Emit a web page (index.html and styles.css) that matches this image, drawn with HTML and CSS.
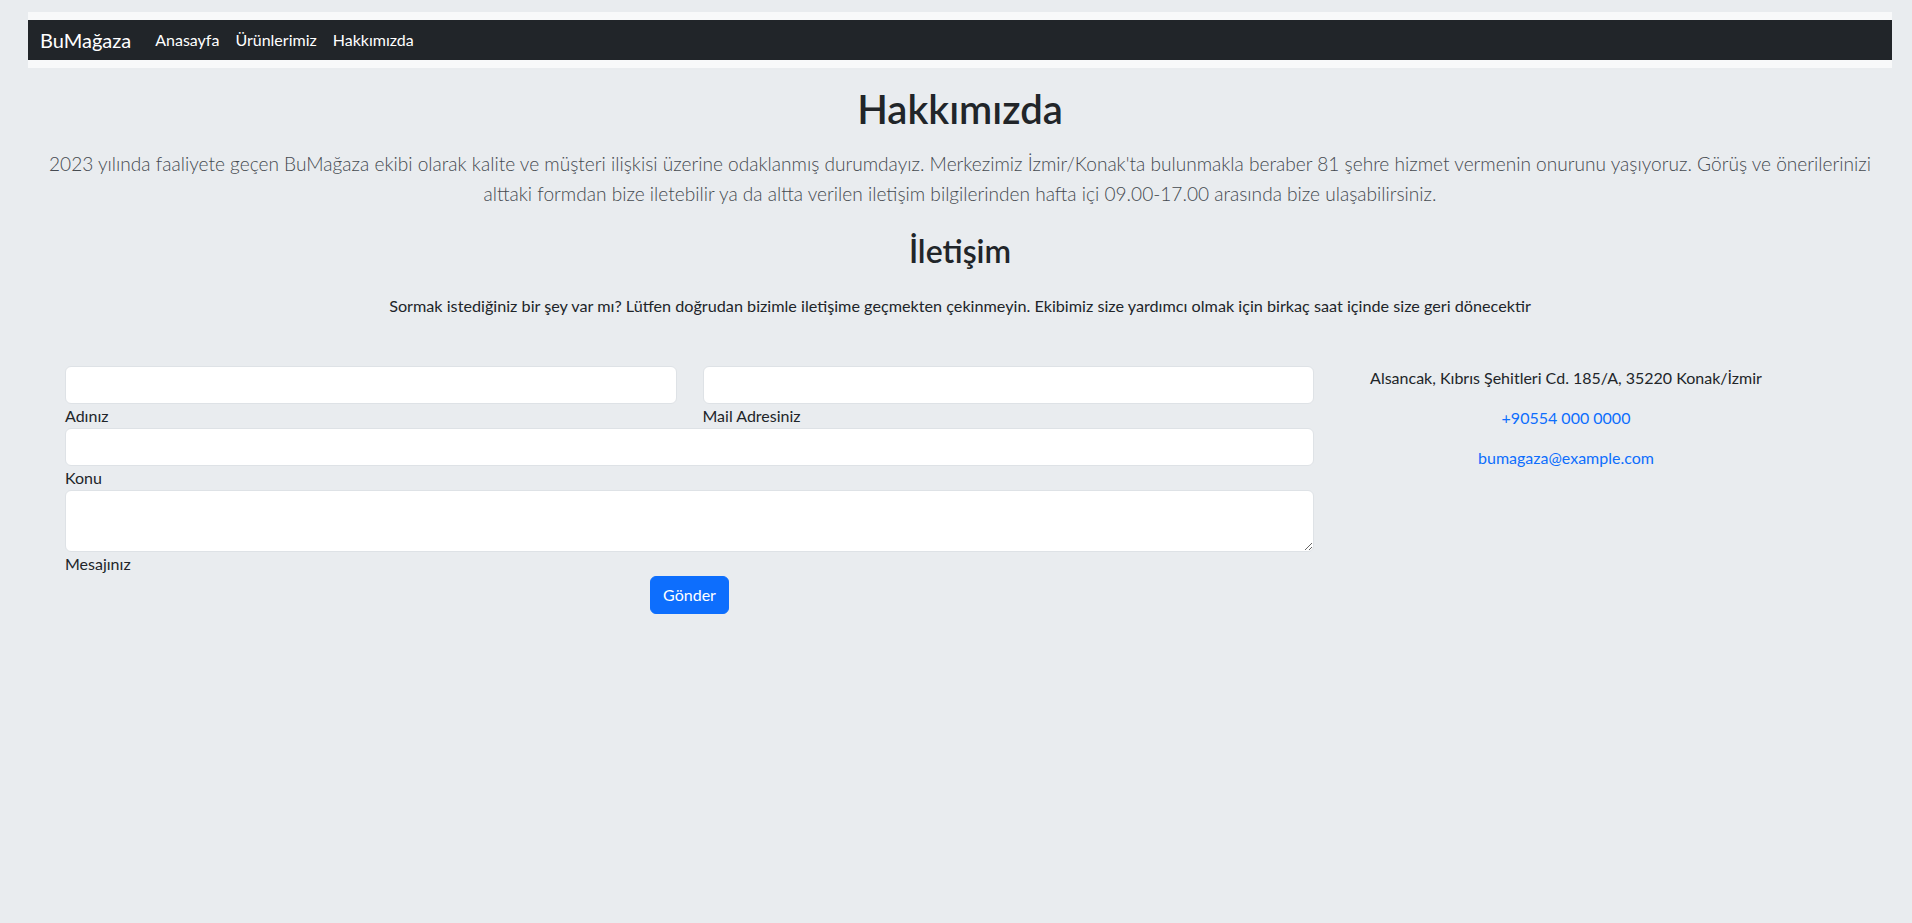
FILE: index.html
```html
<!DOCTYPE html>
<html lang="tr">
<head>
<meta charset="utf-8">
<title>Hakkımızda - BuMağaza</title>
<link rel="stylesheet" href="styles.css">
</head>
<body>
<div class="navwrap">
  <nav class="navbar">
    <a class="brand" href="#">BuMağaza</a>
    <ul class="nav">
      <li><a href="#">Anasayfa</a></li>
      <li><a href="#">Ürünlerimiz</a></li>
      <li><a href="#">Hakkımızda</a></li>
    </ul>
  </nav>
</div>
<main class="about">
  <h1 class="title">Hakkımızda</h1>
  <p class="lead">2023 yılında faaliyete geçen BuMağaza ekibi olarak kalite ve müşteri ilişkisi üzerine odaklanmış durumdayız. Merkezimiz İzmir/Konak'ta bulunmakla beraber 81 şehre hizmet vermenin onurunu yaşıyoruz. Görüş ve önerilerinizi<br>alttaki formdan bize iletebilir ya da altta verilen iletişim bilgilerinden hafta içi 09.00-17.00 arasında bize ulaşabilirsiniz.</p>
  <h2 class="subtitle">İletişim</h2>
  <p class="intro">Sormak istediğiniz bir şey var mı? Lütfen doğrudan bizimle iletişime geçmekten çekinmeyin. Ekibimiz size yardımcı olmak için birkaç saat içinde size geri dönecektir</p>
  <section class="contact">
    <form class="form">
      <div class="pair">
        <div class="field"><input id="ad" type="text"><label for="ad">Adınız</label></div>
        <div class="field"><input id="mail" type="email"><label for="mail">Mail Adresiniz</label></div>
      </div>
      <div class="field"><input id="konu" type="text"><label for="konu">Konu</label></div>
      <div class="field"><textarea id="mesaj" rows="2"></textarea><label for="mesaj">Mesajınız</label></div>
      <div class="actions"><button type="button" class="btn">Gönder</button></div>
    </form>
    <div class="info">
      <p>Alsancak, Kıbrıs Şehitleri Cd. 185/A, 35220 Konak/İzmir</p>
      <p><a href="#">+90554 000 0000</a></p>
      <p><a href="#">bumagaza@example.com</a></p>
    </div>
  </section>
</main>
</body>
</html>
```
FILE: styles.css
```css
* { box-sizing: border-box; }
html, body { margin: 0; padding: 0; }
body {
  background: #e9ecef;
  color: #212529;
  font-family: Lato, "Open Sans", sans-serif;
  font-size: 16px;
  line-height: 24px;
}
.navwrap {
  margin: 12px 20px 0 28px;
  padding: 8px 0;
  background: #f8f9fa;
}
.navbar {
  height: 40px;
  background: #212529;
  display: flex;
  align-items: center;
  padding: 0 12px;
}
.brand {
  color: #fff;
  text-decoration: none;
  font-size: 20px;
  line-height: 30px;
  margin-right: 16px;
}
.nav {
  list-style: none;
  margin: 0;
  padding: 0;
  display: flex;
}
.nav a {
  display: block;
  padding: 0 8px;
  color: #fff;
  text-decoration: none;
  font-size: 16px;
  line-height: 24px;
}
.about {
  margin: 0 20px 0 28px;
  text-align: center;
}
.title {
  margin: 17px 0 0;
  font-size: 40px;
  line-height: 48px;
  font-weight: 600;
}
.lead {
  margin: 16px 0 0;
  font-size: 19.1px;
  line-height: 30px;
  font-weight: 300;
  color: #454a50;
}
.subtitle {
  margin: 23px 0 0;
  font-size: 32px;
  line-height: 38px;
  font-weight: 600;
}
.intro {
  margin: 24px 0 0;
  font-size: 16.2px;
}
.contact {
  margin-top: 48px;
  padding-left: 37px;
  display: grid;
  grid-template-columns: 1249px 504px;
  text-align: left;
}
.form { display: flex; flex-direction: column; }
.pair {
  display: grid;
  grid-template-columns: 1fr 1fr;
  gap: 26px;
}
.field { display: flex; flex-direction: column; }
.field label { font-size: 16px; line-height: 24px; color: #212529; }
.field input, .field textarea {
  display: block;
  width: 100%;
  height: 38px;
  border: 1px solid #dee2e6;
  border-radius: 6px;
  background: #fff;
  font: inherit;
  padding: 6px 12px;
}
.field textarea { height: 62px; resize: vertical; }
.actions { display: flex; justify-content: center; }
.btn {
  width: 79px;
  height: 38px;
  border: 1px solid #0d6efd;
  border-radius: 6px;
  background: #0d6efd;
  color: #fff;
  font: inherit;
  font-size: 16px;
  padding: 0;
}
.info {
  text-align: center;
}
.info p { margin: 0 0 16px; font-size: 16px; }
.info a { color: #0d6efd; text-decoration: none; }
```
